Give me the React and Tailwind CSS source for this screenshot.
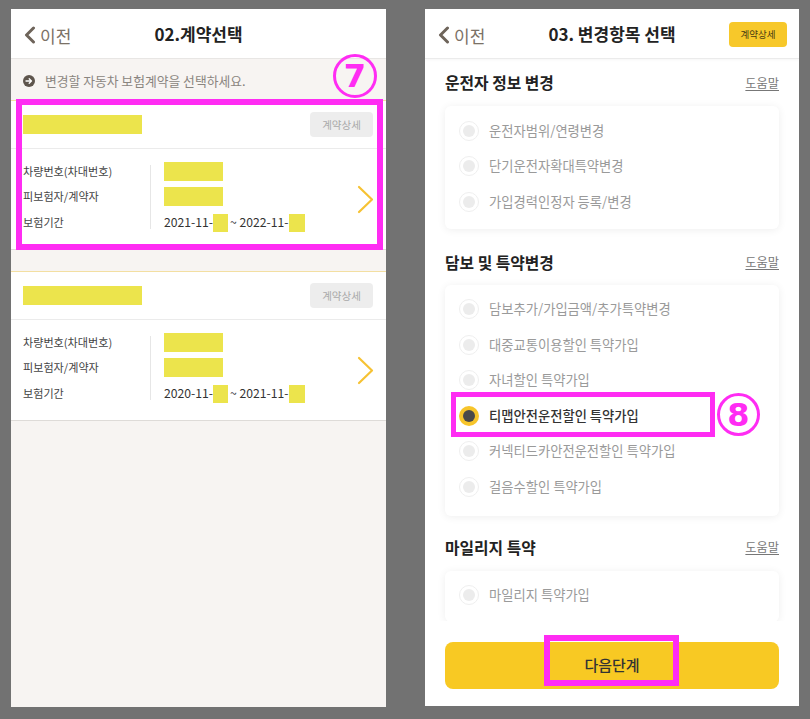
import React from 'react';

const font = { fontFamily: '"Noto Sans CJK KR", "Noto Sans", sans-serif' };

// back button used in both headers
const BackButton = ({ className = '' }) => (
  <div className={`flex items-center gap-[4px] text-[#7b7166] ${className}`}>
    <svg width="13" height="18" viewBox="0 0 13 18" fill="none">
      <path d="M10.5 2 L3.5 9 L10.5 16" stroke="#6e645a" strokeWidth="3" strokeLinecap="round" strokeLinejoin="round" />
    </svg>
    <span className="text-[17px] leading-none">이전</span>
  </div>
);

const Mask = ({ className }) => <div className={`bg-[#ece44c] ${className}`} />;

const ContractCard = ({ from, to, topLine }) => (
  <div className={`bg-white border-b border-[#dedbd8] ${topLine ? 'border-t border-t-[#f3dfa2]' : ''}`}>
    <div className="h-[48px] flex items-center justify-between pl-[12px] pr-[13px] border-b border-[#ebebeb]">
      <Mask className="w-[119px] h-[19px]" />
      <div className="w-[63px] h-[25px] rounded-[4px] bg-[#ededed] flex items-center justify-center text-[10.5px] text-[#a9a9a9]">
        계약상세
      </div>
    </div>
    <div className="h-[100px] flex items-center pl-[12px] pr-[12px] pb-[5px]">
      <div className="w-[127px] flex flex-col text-[11.1px] text-[#444]">
        <div className="h-[25.5px] flex items-center">차량번호(차대번호)</div>
        <div className="h-[25.5px] flex items-center">피보험자/계약자</div>
        <div className="h-[25.5px] flex items-center">보험기간</div>
      </div>
      <div className="w-px h-[64px] bg-[#e6e6e6]" />
      <div className="flex-1 pl-[13px] flex flex-col text-[12.2px] text-[#333]">
        <div className="h-[25.5px] flex items-center"><Mask className="w-[59px] h-[19px]" /></div>
        <div className="h-[25.5px] flex items-center"><Mask className="w-[59px] h-[19px]" /></div>
        <div className="h-[25.5px] flex items-center">
          <span>{from}</span>
          <Mask className="w-[15px] h-[18px] mt-[2px]" />
          <span className="ml-[2px]">~ {to}</span>
          <Mask className="w-[16px] h-[18px] mt-[2px]" />
        </div>
      </div>
      <svg width="17" height="29" viewBox="0 0 17 29" fill="none" className="mt-[5px]">
        <path d="M2 2 L15 14.5 L2 27" stroke="#f6c233" strokeWidth="2.2" strokeLinecap="round" strokeLinejoin="round" />
      </svg>
    </div>
  </div>
);

const Radio = ({ label, selected }) => (
  <div className="h-[35.5px] flex items-center pl-[14px]">
    {selected ? (
      <div className="w-[20px] h-[20px] rounded-full bg-[#f7c52b] flex items-center justify-center">
        <div className="w-[12px] h-[12px] rounded-full bg-[#4a4a4a]" />
      </div>
    ) : (
      <div className="w-[20px] h-[20px] rounded-full border border-[#efefef] bg-white flex items-center justify-center">
        <div className="w-[12px] h-[12px] rounded-full bg-[#ececec]" />
      </div>
    )}
    <span className={`ml-[10px] text-[13.3px] ${selected ? 'text-[#333] font-medium' : 'text-[#9a9a9a]'}`}>{label}</span>
  </div>
);

const Section = ({ title, items, className = '', cardClass = '' }) => (
  <div className={className}>
    <div className="h-[26px] flex items-center justify-between">
      <span className="text-[15.8px] font-bold text-[#222]">{title}</span>
      <span className="text-[12.2px] text-[#777] underline underline-offset-2">도움말</span>
    </div>
    <div className={`bg-white rounded-[6px] shadow-[0_1px_8px_rgba(0,0,0,0.07)] ${cardClass}`}>
      {items.map((it) => (
        <Radio key={it.label} label={it.label} selected={it.selected} />
      ))}
    </div>
  </div>
);

const Circled = ({ n, className }) => (
  <div className={`absolute rounded-full border-[3px] border-[#ff2cf3] flex items-center justify-center text-[#ff2cf3] font-bold text-[32px] leading-none ${className}`}
    style={{ fontFamily: '"DejaVu Sans", sans-serif' }}>
    {n}
  </div>
);

const App = () => {
  return (
    <div className="w-[810px] h-[719px] bg-[#727272] flex items-start pt-[9px] pl-[11px] gap-[39px]" style={font}>
      {/* left screen */}
      <div className="relative w-[375px] h-[698px] bg-[#f7f4f2] flex flex-col overflow-hidden">
        <div className="h-[50px] bg-white border-b border-[#e8e6e4] flex items-center justify-center relative">
          <BackButton className="absolute left-[12px] top-[17px]" />
          <span className="text-[17px] font-bold text-[#222]">02.계약선택</span>
        </div>
        <div className="h-[41px] flex items-center pl-[12px] gap-[10px] pt-[2px]">
          <div className="w-[12px] h-[12px] rounded-full bg-[#5e554d] flex items-center justify-center">
            <svg width="8" height="8" viewBox="0 0 8 8" fill="none">
              <path d="M1 4 H6.5 M4.2 1.8 L6.5 4 L4.2 6.2" stroke="white" strokeWidth="1.3" strokeLinecap="round" strokeLinejoin="round" />
            </svg>
          </div>
          <span className="text-[12.8px] text-[#8a8580]">변경할 자동차 보험계약을 선택하세요.</span>
        </div>
        <ContractCard from="2021-11-" to="2022-11-" topLine />
        <div className="h-[21px]" />
        <ContractCard from="2020-11-" to="2021-11-" topLine />

        <div className="absolute left-[5px] top-[90px] w-[367px] h-[151px] border-[6px] border-[#ff2cf3]" />
        <Circled n="7" className="left-[322px] top-[45px] w-[44px] h-[44px]" />
      </div>

      {/* right screen */}
      <div className="relative w-[374px] h-[697px] bg-white flex flex-col overflow-hidden">
        <div className="h-[50px] border-b border-[#ebebeb] shadow-[0_1px_3px_rgba(0,0,0,0.04)] flex items-center justify-center relative">
          <BackButton className="absolute left-[12px] top-[17px]" />
          <span className="text-[17px] font-bold text-[#222]">03. 변경항목 선택</span>
          <div className="absolute right-[12px] top-[13px] w-[58px] h-[25px] rounded-[4px] bg-[#f7c82a] flex items-center justify-center text-[9.5px] text-[#4a3b12]">
            계약상세
          </div>
        </div>
        <div className="flex-1 overflow-hidden px-[20px] pt-[11px]">
          <Section
            title="운전자 정보 변경"
            cardClass="mt-[10px] pt-[7px] pb-[9px]"
            items={[
              { label: '운전자범위/연령변경' },
              { label: '단기운전자확대특약변경' },
              { label: '가입경력인정자 등록/변경' },
            ]}
          />
          <Section
            title="담보 및 특약변경"
            className="mt-[21px]"
            cardClass="mt-[9px] pt-[7px] pb-[11px]"
            items={[
              { label: '담보추가/가입금액/추가특약변경' },
              { label: '대중교통이용할인 특약가입' },
              { label: '자녀할인 특약가입' },
              { label: '티맵안전운전할인 특약가입', selected: true },
              { label: '커넥티드카안전운전할인 특약가입' },
              { label: '걸음수할인 특약가입' },
            ]}
          />
          <Section
            title="마일리지 특약"
            className="mt-[19px]"
            cardClass="mt-[10px] pt-[7px] pb-[9px]"
            items={[{ label: '마일리지 특약가입' }]}
          />
        </div>
        <div className="h-[85px] bg-white px-[20px] pt-[21px]">
          <div className="h-[47px] rounded-[8px] bg-[#f8c923] flex items-center justify-center text-[15px] font-medium text-[#333]">
            다음단계
          </div>
        </div>

        <div className="absolute left-[26px] top-[383px] w-[264px] h-[45px] border-[5px] border-[#ff2cf3]" />
        <Circled n="8" className="left-[292px] top-[384px] w-[43px] h-[43px]" />
        <div className="absolute left-[119px] top-[626px] w-[135px] h-[51px] border-[6px] border-[#ff2cf3]" />
      </div>
    </div>
  );
};

export default App;
